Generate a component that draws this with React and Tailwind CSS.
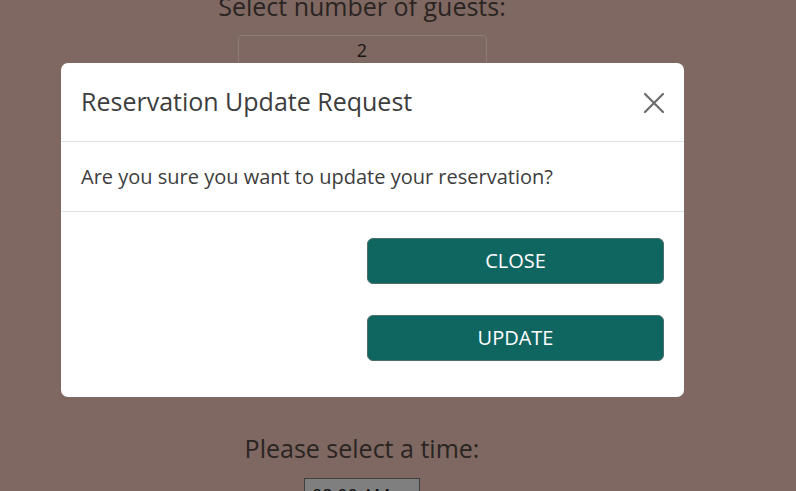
export default function App() {
  return (
    <div
      className="relative h-[491px] w-[796px] overflow-hidden bg-[#7e6861] text-[#2a2422]"
      style={{ fontFamily: '"Open Sans", sans-serif' }}
    >
      <div className="flex w-[724px] flex-col items-center">
        <p className="mt-[-10px] text-[25px] leading-[32px]">Select number of guests:</p>
        <div className="mt-[13px] flex h-[40px] w-[249px] justify-center rounded border border-[#8e7d77] pt-[1px] text-[18px] leading-[26px] text-[#1a1614]">
          2
        </div>
        <p className="mt-[357px] text-[25px] leading-[32px]">Please select a time:</p>
        <div className="mt-[14px] h-[30px] w-[116px] border border-[#3f3f3f] bg-[#7f7f7f] px-[7px] pt-[4px] text-[18px] leading-[24px] text-[#111]">
          08:00 AM
        </div>
      </div>

      <div className="absolute left-[61px] top-[63px] w-[623px] rounded-[7px] bg-white">
        <div className="flex h-[79px] items-center justify-between border-b border-[#dee2e6] pl-[20px] pr-[18px]">
          <h2 className="text-[25px] text-[#3d3d3d]">Reservation Update Request</h2>
          <svg width="24" height="24" viewBox="0 0 24 24" className="mt-[1px]">
            <path d="M3 3 L21 21 M21 3 L3 21" stroke="#6c6c6c" strokeWidth="2.2" strokeLinecap="round" />
          </svg>
        </div>
        <div className="flex h-[70px] items-center border-b border-[#dee2e6] px-[20px]">
          <p className="text-[20px] text-[#3d3d3d]">Are you sure you want to update your reservation?</p>
        </div>
        <div className="flex flex-col items-end gap-[31px] px-[20px] pb-[36px] pt-[26px]">
          <button className="h-[46px] w-[297px] rounded-[6px] border border-[#4d6e6b] bg-[#0f6661] text-[20px] text-white">
            CLOSE
          </button>
          <button className="h-[46px] w-[297px] rounded-[6px] border border-[#4d6e6b] bg-[#0f6661] text-[20px] text-white">
            UPDATE
          </button>
        </div>
      </div>
    </div>
  );
}
